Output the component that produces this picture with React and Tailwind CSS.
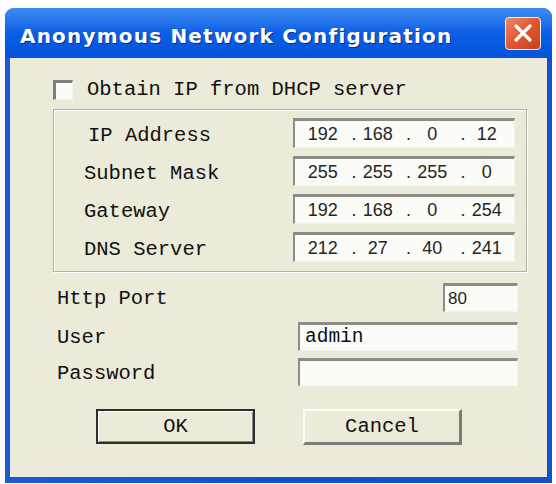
import React from "react";

const mono = "font-['Liberation_Mono',monospace]";
const sans = "font-['Liberation_Sans',Arial,sans-serif]";

function IpField({ parts }) {
  return (
    <div className="w-[222px] h-[30px] bg-[#fbfbf8] border-t-[3px] border-l-[2px] border-r border-b border-t-[#8d8d88] border-l-[#8d8d88] border-r-[#f4f3ee] border-b-[#f4f3ee] flex items-center pl-[1px]">
      {parts.map((p, i) => (
        <div key={i} className={`w-[55px] flex items-center text-[18px] text-[#262626] ${sans}`}>
          {i > 0 ? <span className="w-[5px] pl-[1px]">.</span> : null}
          <span className={`flex-1 text-center ${i > 0 ? "pr-[5px]" : "pr-[1px]"}`}>{p}</span>
        </div>
      ))}
    </div>
  );
}

function Label({ children, className = "" }) {
  return (
    <div className={`${mono} text-[20.5px] leading-none text-[#111111] whitespace-pre ${className}`}>
      {children}
    </div>
  );
}

function TextBox({ w, children }) {
  return (
    <div
      className={`${w} bg-[#fbfbf8] border-t-[3px] border-l-[2px] border-r border-b border-t-[#8d8d88] border-l-[#8d8d88] border-r-[#f4f3ee] border-b-[#f4f3ee] flex items-center`}
    >
      {children}
    </div>
  );
}

export default function App() {
  const rows = [
    ["IP Address", ["192", "168", "0", "12"], "pl-[34px]"],
    ["Subnet Mask", ["255", "255", "255", "0"], "pl-[30px]"],
    ["Gateway", ["192", "168", "0", "254"], "pl-[30px]"],
    ["DNS Server", ["212", "27", "40", "241"], "pl-[30px]"],
  ];
  return (
    <div className="w-[556px] h-[484px] bg-white pl-[5px] pt-[8px]">
      <div className="w-[547px] h-[475px] rounded-t-[9px] bg-gradient-to-r from-[#1d58d8] via-[#0a50d8] to-[#1550d0] flex flex-col px-[5px] pb-[6px]">
        {/* Title bar */}
        <div className="h-[50px] -mx-[5px] rounded-t-[9px] bg-gradient-to-b from-[#3f8cf3] via-[#0a5fe6] to-[#0552db] flex items-center justify-between pl-[15px] pr-[11px]">
          <div className="pt-[5px] font-['DejaVu_Sans',sans-serif] font-bold text-[20px] text-white tracking-[1.2px] [text-shadow:1px_1px_0_#0b2a8a] whitespace-nowrap">
            Anonymous Network Configuration
          </div>
          <div className="w-[36px] h-[33px] rounded-[4px] border border-[#f3f3f3] bg-gradient-to-br from-[#f0866a] via-[#e0552f] to-[#c8401e] flex items-center justify-center">
            <svg width="22" height="20" viewBox="0 0 22 20">
              <path d="M4 3 L18 17 M18 3 L4 17" stroke="#ffffff" strokeWidth="3.2" strokeLinecap="round" />
            </svg>
          </div>
        </div>

        {/* Client area */}
        <div className="flex-1 bg-[#ecead9] flex flex-col">
          {/* Checkbox row */}
          <div className="mt-[22px] ml-[43px] flex items-center h-[20px]">
            <div className="w-[20px] h-[20px] bg-[#fbfbf8] border-t-[3px] border-l-[3px] border-r border-b border-t-[#7f7f7a] border-l-[#7f7f7a] border-r-[#f4f3ee] border-b-[#f4f3ee]" />
            <Label className="ml-[14px] pt-[1px]">Obtain IP from DHCP server</Label>
          </div>

          {/* Group box */}
          <div className="mt-[9px] ml-[43px] w-[474px] h-[163px] border border-[#b4b1a3] shadow-[inset_1px_1px_0_#ffffff,1px_1px_0_#ffffff] pt-[8px] flex flex-col gap-[8px]">
            {rows.map(([label, parts, pad]) => (
              <div key={label} className="flex items-center h-[30px]">
                <div className={`w-[239px] ${pad} pt-[7px]`}>
                  <Label>{label}</Label>
                </div>
                <IpField parts={parts} />
              </div>
            ))}
          </div>

          {/* Http Port */}
          <div className="mt-[11px] flex items-center h-[29px]">
            <div className="w-[433px] pl-[47px] pt-[4px]">
              <Label>Http Port</Label>
            </div>
            <TextBox w="w-[75px] h-[29px]">
              <span className={`pl-[3px] text-[17px] text-[#262626] ${sans}`}>80</span>
            </TextBox>
          </div>

          {/* User */}
          <div className="mt-[10px] flex items-center h-[29px]">
            <div className="w-[288px] pl-[47px] pt-[4px]">
              <Label>User</Label>
            </div>
            <TextBox w="w-[220px] h-[29px]">
              <span className={`pl-[5px] ${mono} text-[19.5px] text-[#111111]`}>admin</span>
            </TextBox>
          </div>

          {/* Password */}
          <div className="mt-[7px] flex items-center h-[28px]">
            <div className="w-[288px] pl-[47px] pt-[4px]">
              <Label>Password</Label>
            </div>
            <TextBox w="w-[220px] h-[28px]" />
          </div>

          {/* Buttons */}
          <div className="mt-[23px] ml-[86px] flex items-start gap-[48px]">
            <div className="w-[159px] h-[35px] border-[2px] border-[#2e2e2c] shadow-[inset_1px_1px_0_#ffffff,inset_-1px_-1px_0_#8a8a84] bg-[#ecead9] flex items-center justify-center">
              <span className={`${mono} text-[20.5px] text-[#111111] leading-none pt-[1px]`}>OK</span>
            </div>
            <div className="w-[159px] h-[36px] border-t-[2px] border-l-[2px] border-r-[3px] border-b-[3px] border-t-[#fdfdfb] border-l-[#fdfdfb] border-r-[#7d7d78] border-b-[#7d7d78] bg-[#ecead9] flex items-center justify-center">
              <span className={`${mono} text-[20.5px] text-[#111111] leading-none pt-[1px]`}>Cancel</span>
            </div>
          </div>
        </div>
      </div>
    </div>
  );
}
